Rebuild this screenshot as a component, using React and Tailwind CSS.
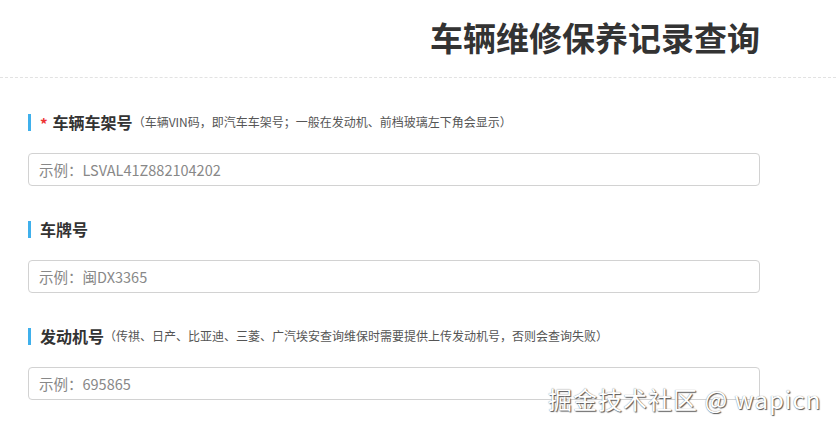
const FONT = { fontFamily: "'Noto Sans CJK SC', 'Noto Sans', sans-serif" }

const fields = [
  {
    label: '车辆车架号',
    required: true,
    hint: '（车辆VIN码，即汽车车架号；一般在发动机、前档玻璃左下角会显示）',
    placeholder: '示例：LSVAL41Z882104202',
  },
  { label: '车牌号', placeholder: '示例：闽DX3365' },
  {
    label: '发动机号',
    hint: '（传祺、日产、比亚迪、三菱、广汽埃安查询维保时需要提供上传发动机号，否则会查询失败）',
    placeholder: '示例：695865',
  },
]

function Field({ f }) {
  return (
    <div className="flex flex-col">
      <div className="flex items-center h-[20px] mb-[21px]">
        <span className="w-[3px] h-[17px] bg-[#3fb0ec] mr-[9px]" />
        {f.required && <span className="text-[#e33] text-[15px] font-bold mr-[5px] mt-[2px] leading-none">*</span>}
        <span className="text-[16px] font-bold text-[#333] leading-none">{f.label}</span>
        {f.hint && <span className="text-[12px] text-[#555] leading-none">{f.hint}</span>}
      </div>
      <input
        className="h-[33px] w-full rounded-[4px] border border-[#d2d2d2] px-[10px] text-[14.5px] text-[#333] placeholder:text-[#888] outline-none"
        style={FONT}
        placeholder={f.placeholder}
      />
    </div>
  )
}

export default function App() {
  return (
    <div className="relative w-[836px] h-[428px] bg-white overflow-hidden" style={FONT}>
      <div className="h-[78px] border-b border-dashed border-[#e2e2e2] flex items-center pl-[430px] pb-[2px]">
        <h1 className="text-[33px] font-bold text-[#333] leading-none">车辆维修保养记录查询</h1>
      </div>

      <div className="flex flex-col gap-[33px] pl-[28px] pr-[76px] pt-[34px]">
        {fields.map(f => <Field key={f.label} f={f} />)}
      </div>

      {/* watermark */}
      <div className="absolute left-[548px] top-[381px] text-[24px] text-white tracking-[1px]"
        style={{ textShadow: '1px 1px 1px #555, 0 0 1px #777' }}>
        掘金技术社区 @ wapicn
      </div>
    </div>
  )
}
